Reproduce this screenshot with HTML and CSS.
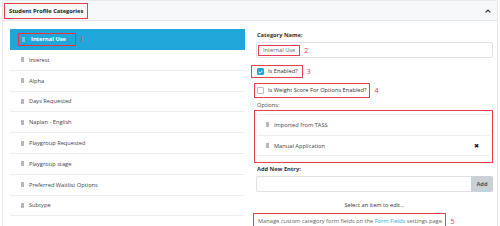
FILE: index.html
```html
<!DOCTYPE html>
<html lang="en">
<head>
  <meta charset="UTF-8" />
  <title>Student Profile Categories</title>
  <link rel="stylesheet" href="styles.css">
</head>
<body>

<div class="panel">
  <div class="panel-head">
    <span class="title mark">Student Profile Categories</span>
    <svg class="chevron" width="6" height="4" viewBox="0 0 6 4"><path d="M0.6 3.4 L3 1 L5.4 3.4" fill="none" stroke="#333" stroke-width="1.2"/></svg>
  </div>

  <div class="panel-body">
    <!-- category list -->
    <ul class="cat-list">
      <li class="active"><span class="mark sel"><i class="grip"></i>Internal Use</span><b class="num serif">1</b></li>
      <li><i class="grip"></i>Interest</li>
      <li><i class="grip"></i>Alpha</li>
      <li><i class="grip"></i>Days Requested</li>
      <li><i class="grip"></i>Naplan - English</li>
      <li><i class="grip"></i>Playgroup Requested</li>
      <li><i class="grip"></i>Playgroup stage</li>
      <li><i class="grip"></i>Preferred Waitlist Options</li>
      <li><i class="grip"></i>Subtype</li>
      <li></li>
    </ul>

    <!-- edit form -->
    <div class="editor">
      <div class="label">Category Name:</div>
      <div class="input"><span class="mark value">Internal Use</span><b class="num">2</b></div>

      <div class="check-row">
        <span class="mark check-mark"><span class="box on"><svg width="5" height="4" viewBox="0 0 5 4"><path d="M0.6 2 L2 3.2 L4.4 0.8" fill="none" stroke="#fff" stroke-width="1"/></svg></span>Is Enabled?</span><b class="num">3</b>
      </div>
      <div class="check-row second">
        <span class="mark check-mark wide"><span class="box"></span>Is Weight Score For Options Enabled?</span><b class="num">4</b>
      </div>

      <div class="label light">Options:</div>
      <div class="mark options">
        <ul class="opt-list">
          <li><i class="grip"></i>Imported from TASS</li>
          <li><i class="grip"></i>Manual Application<span class="remove">&#10006;</span></li>
        </ul>
      </div>

      <div class="label">Add New Entry:</div>
      <div class="input-group">
        <div class="input grow"></div>
        <button class="add-btn">Add</button>
      </div>

      <div class="hint">Select an item to edit...</div>

      <div class="footer-note">
        <span class="mark note">Manage custom category form fields on the <a href="#">Form Fields</a> settings page.</span><b class="num">5</b>
      </div>
    </div>
  </div>
</div>

</body>
</html>
```

FILE: styles.css
```css
* { margin: 0; padding: 0; box-sizing: border-box; }

html, body {
  background: #fff;
  font-family: "Open Sans", "Liberation Sans", sans-serif;
  font-size: 5.7px;
  color: #333;
  overflow: hidden;
}

ul { list-style: none; }

.panel {
  margin: 0 2px;
  height: 226px;
  border-left: 1px solid #e4e7ea;
  border-right: 1px solid #e4e7ea;
}

.panel-head {
  height: 21px;
  background: #f7f8f9;
  border-top: 1px solid #e8ebee;
  border-bottom: 1px solid #e2e6ea;
  display: flex;
  align-items: center;
  justify-content: space-between;
  padding: 0 6px 0 1px;
}

.mark {
  border: 1px solid #e5404c;
}

.title {
  font-weight: bold;
  color: #222;
  padding: 3px 4px;
  line-height: 8px;
}

.chevron { margin-top: 1px; }

.num {
  color: #e5404c;
  font-weight: normal;
  font-size: 7px;
  margin-left: 4px;
}

.num.serif { font-family: "Liberation Serif", serif; font-size: 7.5px; }

.panel-body {
  display: grid;
  grid-template-columns: 235px 1fr;
  gap: 11px;
  padding: 8px 4px 0 7px;
}

/* left list */
.cat-list li {
  height: 20.8px;
  border-bottom: 1px solid #eceef0;
  display: flex;
  align-items: center;
  padding-left: 11px;
  color: #444;
}

.cat-list li.active {
  height: 21px;
  background: #21a6da;
  color: #fff;
  font-weight: bold;
  border-bottom: none;
  padding-left: 8px;
}

.sel {
  display: inline-block;
  border: 1px solid #ee3340;
  padding: 2px 9px 2px 3px;
  line-height: 7px;
  white-space: nowrap;
}

.grip {
  display: inline-block;
  width: 3px;
  height: 5px;
  margin-right: 5px;
  background: radial-gradient(circle, #b5b9bd 0.6px, transparent 0.7px) 0 0 / 1.5px 1.7px;
}

.sel .grip {
  background: radial-gradient(circle, #6cc4e8 0.6px, transparent 0.7px) 0 0 / 1.5px 1.7px;
  margin-right: 6px;
  vertical-align: -0.5px;
}

/* right form */
.editor {
  display: flex;
  flex-direction: column;
}

.label {
  font-weight: bold;
  color: #333;
  line-height: 8px;
  margin-top: 2px;
  padding-left: 1px;
}

.label.light { font-weight: normal; color: #444; margin-top: 3px; }

.input {
  height: 16px;
  margin-top: 3px;
  border: 1px solid #dfe3e7;
  border-radius: 2px;
  display: flex;
  align-items: center;
  padding-left: 1px;
}

.value {
  color: #666;
  padding: 1px 4px 1px 4px;
  line-height: 7px;
}

.check-row {
  display: flex;
  align-items: center;
  margin-top: 7px;
  margin-left: -5px;
}

.check-row.second { margin-top: 5px; margin-left: -2px; }

.check-mark {
  display: flex;
  align-items: center;
  padding: 2px 4px 2px 5px;
  line-height: 7px;
  color: #333;
}

.check-mark.wide { padding: 3px 3px 3px 2px; }

.box {
  width: 7px;
  height: 7px;
  border: 1px solid #b8bec4;
  border-radius: 1px;
  margin-right: 4px;
  display: flex;
  align-items: center;
  justify-content: center;
}

.box.on {
  background: #21a6da;
  border-color: #21a6da;
}

.options {
  margin-top: 1px;
  margin-left: -2px;
  padding: 3px 2px 6px 2px;
}

.opt-list { border-top: 1px solid #eceef0; }

.opt-list li {
  height: 20.7px;
  border-bottom: 1px solid #eceef0;
  display: flex;
  align-items: center;
  padding-left: 9px;
  color: #444;
}

.remove {
  margin-left: auto;
  margin-right: 11px;
  font-size: 6px;
  color: #111;
}

.input-group {
  display: flex;
  margin-top: 3px;
}

.input-group .input {
  margin-top: 0;
  flex: 1;
  border-right: none;
  border-radius: 2px 0 0 2px;
}

.add-btn {
  width: 22px;
  height: 16px;
  border: none;
  border-radius: 0 2px 2px 0;
  background: #c9d1d7;
  color: #555;
  font-family: inherit;
  font-size: 5.7px;
  font-weight: bold;
}

.hint {
  text-align: center;
  margin-top: 9px;
  line-height: 8px;
  color: #333;
}

.footer-note {
  display: flex;
  align-items: center;
  margin-top: 4px;
  margin-left: -3px;
}

.note {
  color: #666;
  padding: 4px 2px 4px 4px;
  line-height: 7px;
}

.note a {
  color: #2ea6da;
  text-decoration: none;
}
```
